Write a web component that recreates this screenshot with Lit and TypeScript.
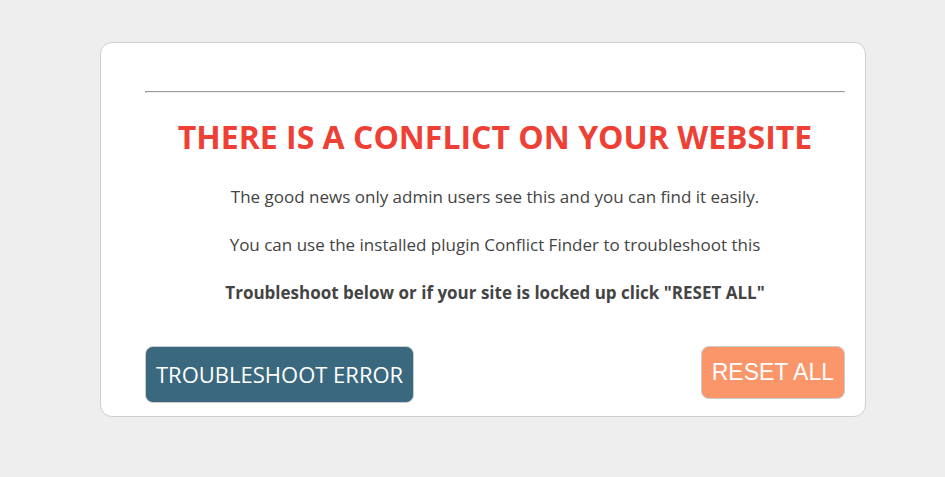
import { LitElement, html, css } from "lit";
import { customElement } from "lit/decorators.js";

@customElement("app-root")
export class AppRoot extends LitElement {
  static styles = css`
    :host {
      display: block;
      box-sizing: border-box;
      min-height: 100vh;
      padding: 42px 79px 60px 100px;
      background: #eeeeee;
      color: #444444;
      font-family: "Segoe UI", "Open Sans", "Noto Sans", sans-serif;
    }
    .card {
      padding: 48px 20px 13px 44px;
      border: 1px solid #ccd0d4;
      border-radius: 12px;
      background: #ffffff;
      text-align: center;
    }
    .rule {
      height: 0;
      margin: 0;
      border: 1px solid;
      border-color: #9a9a9a #eeeeee #eeeeee #9a9a9a;
    }
    .title {
      margin: 20px 0 24px;
      color: #ee4035;
      font-size: 32px;
      line-height: 48px;
      font-weight: 700;
    }
    .text {
      margin: 0 0 24px;
      font-size: 17px;
      line-height: 24px;
    }
    .strong {
      font-weight: 700;
    }
    .actions {
      display: flex;
      justify-content: space-between;
      align-items: flex-start;
      margin-top: 41px;
    }
    .button {
      margin: 0;
      padding: 10px;
      border: 1px solid #cccccc;
      border-radius: 8px;
      color: #ffffff;
      cursor: pointer;
      white-space: nowrap;
    }
    .troubleshoot {
      background: #3a687e;
      font-family: inherit;
      font-size: 22px;
      line-height: 35px;
    }
    .reset {
      background: #fb956a;
      font-family: "Liberation Sans", Arial, sans-serif;
      font-size: 23px;
      line-height: 31px;
    }
  `;

  render() {
    return html`
      <main class="card">
        <hr class="rule" />
        <h1 class="title">THERE IS A CONFLICT ON YOUR WEBSITE</h1>
        <p class="text">The good news only admin users see this and you can find it easily.</p>
        <p class="text">You can use the installed plugin Conflict Finder to troubleshoot this</p>
        <p class="text strong">Troubleshoot below or if your site is locked up click "RESET ALL"</p>
        <div class="actions">
          <button class="button troubleshoot" type="button">TROUBLESHOOT ERROR</button>
          <button class="button reset" type="button">RESET ALL</button>
        </div>
      </main>
    `;
  }
}
